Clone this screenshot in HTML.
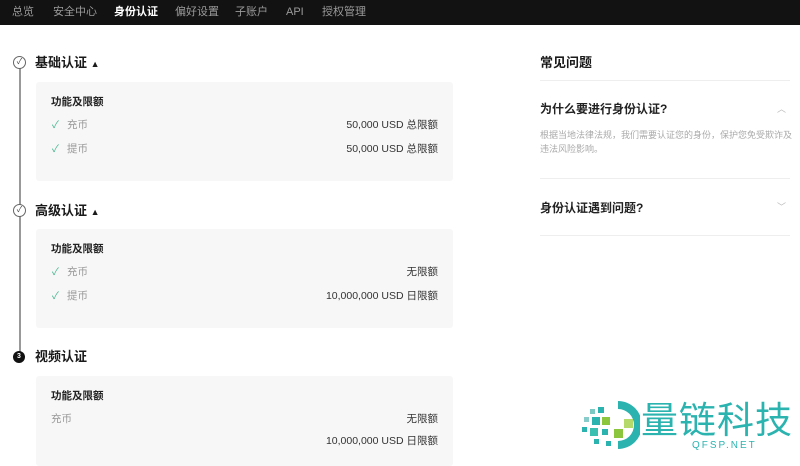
<!DOCTYPE html>
<html><head><meta charset="utf-8"><style>
*{margin:0;padding:0;box-sizing:border-box}
body{width:800px;height:456px;overflow:hidden;background:#fff;font-family:"Liberation Sans","Noto Sans CJK SC",sans-serif;position:relative;color:#222}
.a{position:absolute;white-space:nowrap}
.nav{position:absolute;left:0;top:0;width:800px;height:25px;background:#121212}
.nav span{position:absolute;top:5px;font-size:11px;color:#9a9a9a;line-height:14px}
.card{position:absolute;left:36px;width:417px;background:#f7f7f7;border-radius:3px}
.h{font-size:13px;font-weight:bold;line-height:16px;color:#1a1a1a}
.sub{font-size:10.5px;font-weight:bold;line-height:13px;color:#222}
.lbl{font-size:10.5px;color:#999;line-height:13px}
.val{font-size:10.5px;color:#333;line-height:13px;text-align:right;right:362px}
.chk{color:#3fb48d;font-size:10px;line-height:13px}
.circ{position:absolute;width:13px;height:13px;border:1.2px solid #666;border-radius:50%;background:#fff;font-size:8px;text-align:center;line-height:10px;color:#444}
.div{position:absolute;left:540px;width:250px;height:1px;background:#eee}
</style></head><body>
<div class="nav">
<span style="left:12px">总览</span>
<span style="left:53px">安全中心</span>
<span style="left:114px;color:#fff;font-weight:bold">身份认证</span>
<span style="left:175px">偏好设置</span>
<span style="left:235px">子账户</span>
<span style="left:286px">API</span>
<span style="left:322px">授权管理</span>
</div>
<div class="a" style="left:19px;top:68px;width:2px;height:286px;background:#999"></div>

<div class="circ" style="left:13px;top:56px">✓</div>
<div class="a h" style="left:35px;top:55px">基础认证 <span style="font-size:9px">▲</span></div>
<div class="card" style="top:82px;height:99px"></div>
<div class="a sub" style="left:51px;top:96px">功能及限额</div>
<div class="a chk" style="left:52px;top:119px">✓</div><div class="a lbl" style="left:67px;top:119px">充币</div>
<div class="a val" style="top:119px">50,000 USD 总限额</div>
<div class="a chk" style="left:52px;top:143px">✓</div><div class="a lbl" style="left:67px;top:143px">提币</div>
<div class="a val" style="top:143px">50,000 USD 总限额</div>

<div class="circ" style="left:13px;top:204px">✓</div>
<div class="a h" style="left:35px;top:203px">高级认证 <span style="font-size:9px">▲</span></div>
<div class="card" style="top:229px;height:99px"></div>
<div class="a sub" style="left:51px;top:243px">功能及限额</div>
<div class="a chk" style="left:52px;top:266px">✓</div><div class="a lbl" style="left:67px;top:266px">充币</div>
<div class="a val" style="top:266px">无限额</div>
<div class="a chk" style="left:52px;top:290px">✓</div><div class="a lbl" style="left:67px;top:290px">提币</div>
<div class="a val" style="top:290px">10,000,000 USD 日限额</div>

<div class="a" style="left:13px;top:351px;width:12px;height:12px;border-radius:50%;background:#111;color:#fff;font-size:7px;text-align:center;line-height:12px;font-weight:bold">3</div>
<div class="a h" style="left:35px;top:349px">视频认证</div>
<div class="card" style="top:376px;height:90px"></div>
<div class="a sub" style="left:51px;top:390px">功能及限额</div>
<div class="a lbl" style="left:51px;top:413px">充币</div>
<div class="a val" style="top:413px">无限额</div>
<div class="a val" style="top:435px">10,000,000 USD 日限额</div>

<div class="a h" style="left:540px;top:55px">常见问题</div>
<div class="div" style="top:80px"></div>
<div class="a" style="left:540px;top:102px;font-size:12px;font-weight:bold;line-height:15px">为什么要进行身份认证?</div>
<div class="a" style="left:777px;top:102px;font-size:9px;color:#bbb">︿</div>
<div class="a" style="left:540px;top:128px;font-size:9px;color:#aaa;line-height:14px">根据当地法律法规，我们需要认证您的身份，保护您免受欺诈及<br>违法风险影响。</div>
<div class="div" style="top:178px"></div>
<div class="a" style="left:540px;top:201px;font-size:12px;font-weight:bold;line-height:15px">身份认证遇到问题?</div>
<div class="a" style="left:777px;top:200px;font-size:9px;color:#bbb">﹀</div>
<div class="div" style="top:235px"></div>

<svg class="a" style="left:580px;top:397px" width="60" height="56" viewBox="0 0 60 56">
<path d="M38 4 A24 24 0 0 1 38 52 L38 44 A16 16 0 0 0 38 12 Z" fill="#2bb3b0"/>
<rect x="10" y="12" width="5" height="5" fill="#7cc9c4"/><rect x="18" y="10" width="6" height="6" fill="#2bb3b0"/>
<rect x="4" y="20" width="5" height="5" fill="#8cc"/><rect x="12" y="20" width="8" height="8" fill="#2bb3b0"/><rect x="22" y="20" width="8" height="8" fill="#8cc63f"/>
<rect x="44" y="22" width="9" height="9" fill="#b5d96a"/>
<rect x="2" y="30" width="5" height="5" fill="#2bb3b0"/><rect x="10" y="31" width="8" height="8" fill="#3bbfb0"/><rect x="22" y="32" width="6" height="6" fill="#2bb3b0"/><rect x="34" y="32" width="9" height="9" fill="#8cc63f"/>
<rect x="14" y="42" width="5" height="5" fill="#2bb3b0"/><rect x="26" y="44" width="5" height="5" fill="#2bb3b0"/>
</svg>
<div class="a" style="left:641px;top:396px;font-size:37px;line-height:42px;color:#2bb3b0;font-family:'Noto Sans CJK SC',sans-serif;letter-spacing:1px">量链科技</div>
<div class="a" style="left:692px;top:440px;font-size:10px;color:#2bb3b0;letter-spacing:2px">QFSP.NET</div>
</body></html>
